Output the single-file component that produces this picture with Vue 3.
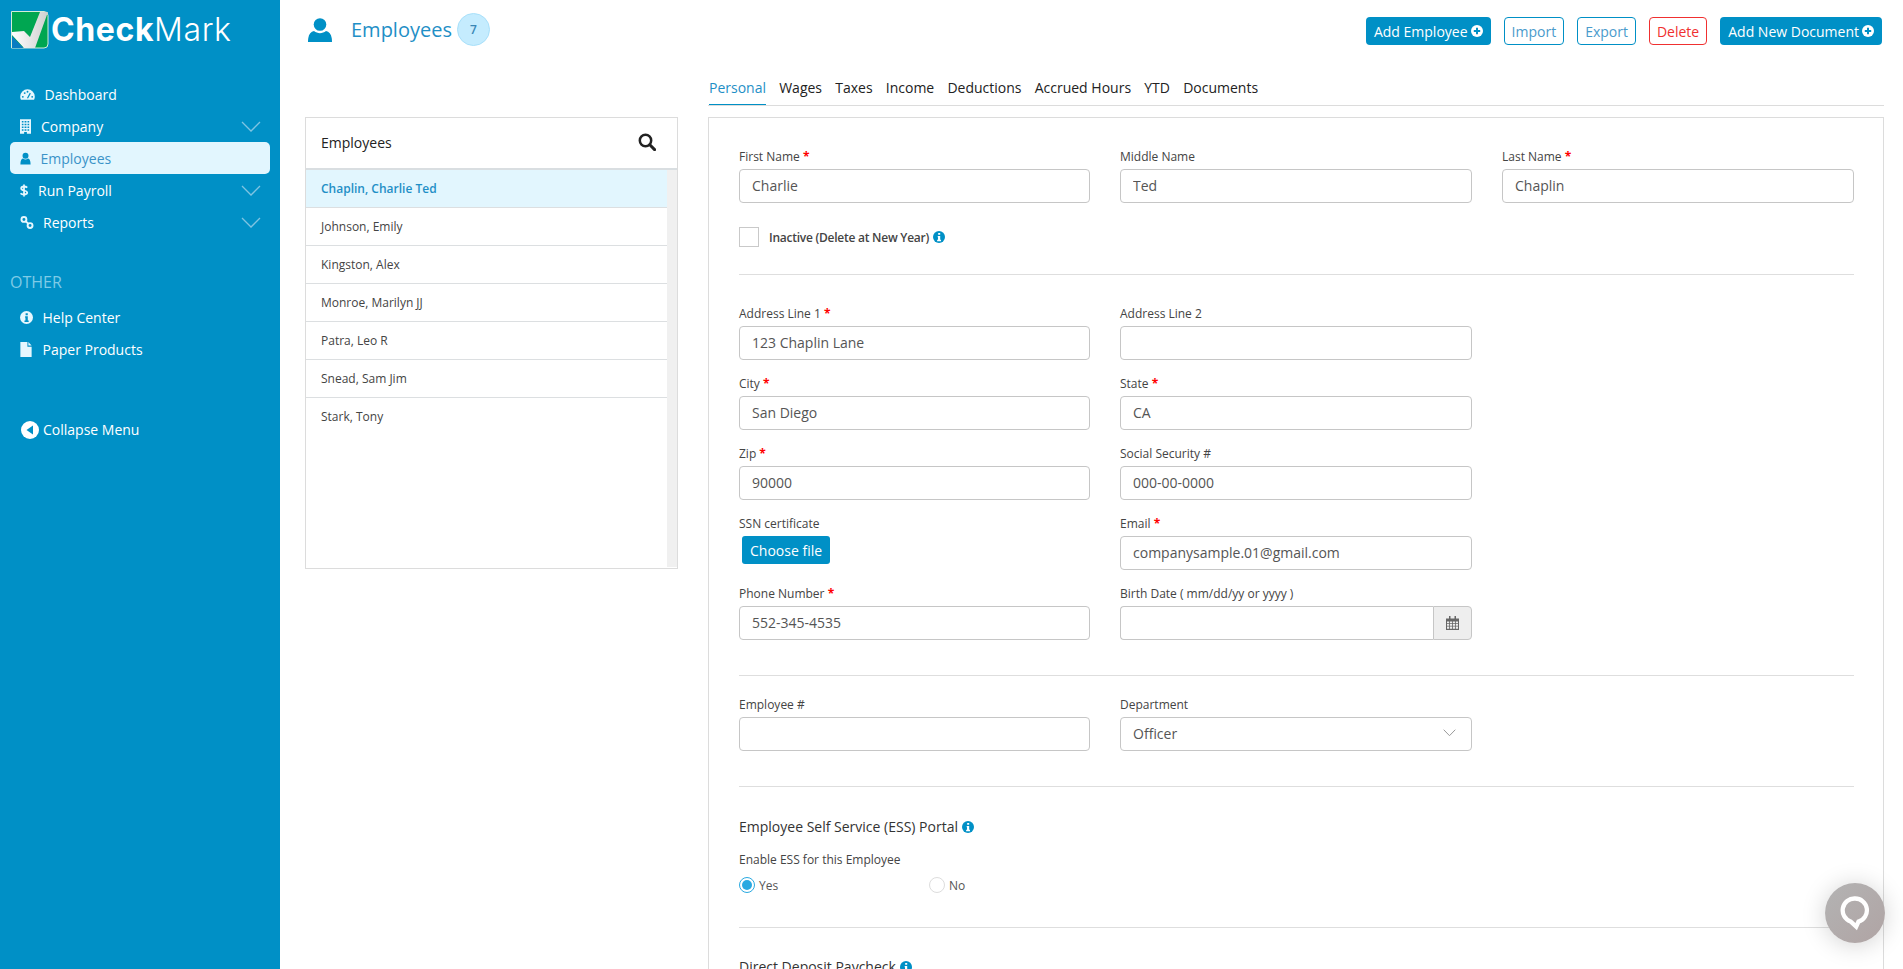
<template>
  <div class="layout">
    <aside class="sidebar">
      <div class="brand">
        <svg class="brand-mark" width="38" height="38" viewBox="0 0 38 38">
          <defs>
            <linearGradient id="check-shade" x1="0" y1="0" x2="1" y2="0">
              <stop offset="0" stop-color="#fff" />
              <stop offset="1" stop-color="#cfcfcf" />
            </linearGradient>
          </defs>
          <path d="M.5 .5H33a4 4 0 0 1 4 4V33a4 4 0 0 1-4 4H.5z" fill="#00a651" stroke="#d5ecd9" />
          <path d="M1 21 L13 20 L19 26 L29 1 H37 L24 37 H13 L1 24 Z" fill="url(#check-shade)" />
          <path d="M1 25 L12.500 37 H1 Z" fill="#0a7cc1" />
        </svg>
        <span class="brand-name"><b>Check</b>Mark</span>
      </div>

      <nav class="nav">
        <a
          v-for="item in mainNav"
          :key="item.label"
          class="nav-item"
          :class="{ active: item.active }"
        >
          <svg class="nav-icon" :style="{ width: item.w + 'px', marginRight: item.gap + 'px' }" :viewBox="item.vb" v-html="icons[item.icon]"></svg>
          <span>{{ item.label }}</span>
          <svg v-if="item.arrow" class="nav-arrow" width="20" height="11" viewBox="0 0 20 11">
            <path d="M1 1l9 9 9-9" fill="none" stroke="#7fc4e2" stroke-width="1.3" />
          </svg>
        </a>
      </nav>

      <div class="nav-title">OTHER</div>

      <nav class="nav">
        <a v-for="item in otherNav" :key="item.label" class="nav-item">
          <svg class="nav-icon" :style="{ width: item.w + 'px', marginRight: item.gap + 'px' }" :viewBox="item.vb" v-html="icons[item.icon]"></svg>
          <span>{{ item.label }}</span>
        </a>
      </nav>

      <a class="collapse">
        <svg width="18" height="18" viewBox="0 0 18 18">
          <circle cx="9" cy="9" r="9" fill="#fff" />
          <path d="M12 4.500v9L5.500 9z" fill="#0090c6" />
        </svg>
        <span>Collapse Menu</span>
      </a>
    </aside>

    <main class="main">
      <header class="topbar">
        <div class="page-title">
          <svg class="page-icon" width="24" height="24" viewBox="0 0 24 24">
            <circle cx="12" cy="6.500" r="6.300" fill="#0090c6" />
            <path d="M0 24c0-1 0-2 .3-4 .6-4 2.700-6.500 5.700-7 1.800 1.400 3.800 2.200 6 2.200s4.200-.8 6-2.200c3 .5 5.100 3 5.700 7 .3 2 .3 3 .3 4z" fill="#0090c6" />
          </svg>
          <h1>Employees</h1>
          <span class="count">7</span>
        </div>
        <div class="actions">
          <button class="btn solid">Add Employee <svg class="plus" viewBox="0 0 12 12"><circle cx="6" cy="6" r="6" fill="#fff" /><path d="M6 2.800v6.400M2.800 6h6.400" stroke="#0090c6" stroke-width="2" /></svg></button>
          <button class="btn outline">Import</button>
          <button class="btn outline">Export</button>
          <button class="btn danger">Delete</button>
          <button class="btn solid">Add New Document <svg class="plus" viewBox="0 0 12 12"><circle cx="6" cy="6" r="6" fill="#fff" /><path d="M6 2.800v6.400M2.800 6h6.400" stroke="#0090c6" stroke-width="2" /></svg></button>
        </div>
      </header>

      <div class="content">
        <section class="list-card">
          <div class="list-head">
            <span>Employees</span>
            <svg width="18" height="18" viewBox="0 0 18 18">
              <circle cx="7.500" cy="7.500" r="5.700" fill="none" stroke="#222" stroke-width="2.500" />
              <path d="M11.800 11.800l4.800 4.800" stroke="#222" stroke-width="3" stroke-linecap="round" />
            </svg>
          </div>
          <div class="list-body">
            <ul class="list">
              <li
                v-for="(name, i) in employees"
                :key="name"
                :class="{ selected: i === 0 }"
              >{{ name }}</li>
            </ul>
            <div class="track"></div>
          </div>
        </section>

        <section class="detail">
          <div class="tabs">
            <a v-for="(tab, i) in tabs" :key="tab" class="tab" :class="{ active: i === 0 }">{{ tab }}</a>
          </div>

          <div class="panel">
            <div class="grid three">
              <div class="field"><label>First Name <i>*</i></label><input value="Charlie" /></div>
              <div class="field"><label>Middle Name</label><input value="Ted" /></div>
              <div class="field"><label>Last Name <i>*</i></label><input value="Chaplin" /></div>
            </div>

            <div class="inactive">
              <span class="checkbox"></span>
              <span class="inactive-text">Inactive (Delete at New Year)</span>
              <svg class="info" width="12" height="12" viewBox="0 0 16 16" v-html="icons.info"></svg>
            </div>

            <hr class="sep sep-a" />

            <div class="grid three rows">
              <div class="field"><label>Address Line 1 <i>*</i></label><input value="123 Chaplin Lane" /></div>
              <div class="field"><label>Address Line 2</label><input value="" /></div>
              <div></div>

              <div class="field"><label>City <i>*</i></label><input value="San Diego" /></div>
              <div class="field"><label>State <i>*</i></label><input value="CA" /></div>
              <div></div>

              <div class="field"><label>Zip <i>*</i></label><input value="90000" /></div>
              <div class="field"><label>Social Security #</label><input value="000-00-0000" /></div>
              <div></div>

              <div class="field">
                <label>SSN certificate</label>
                <button class="file-btn">Choose file</button>
              </div>
              <div class="field"><label>Email <i>*</i></label><input value="companysample.01@gmail.com" /></div>
              <div></div>

              <div class="field"><label>Phone Number <i>*</i></label><input value="552-345-4535" /></div>
              <div class="field">
                <label>Birth Date ( mm/dd/yy or yyyy )</label>
                <div class="date">
                  <input value="" />
                  <span class="date-btn">
                    <svg width="13" height="14" viewBox="0 0 13 14">
                      <path d="M0 2.500h13V14H0z" fill="#666" />
                      <path d="M1 5.500h2.200v1.700H1zM4 5.500h2.200v1.700H4zM7 5.500h2v1.700H7zM9.800 5.500H12v1.700H9.800zM1 8h2.200v1.700H1zM4 8h2.200v1.700H4zM7 8h2v1.700H7zM9.800 8H12v1.700H9.800zM1 10.500h2.200v2.300H1zM4 10.500h2.200v2.300H4zM7 10.500h2v2.300H7zM9.800 10.500H12v2.300H9.800z" fill="#eee" />
                      <path d="M3 0h1.500v4H3zM8.500 0H10v4H8.500z" fill="#666" />
                    </svg>
                  </span>
                </div>
              </div>
            </div>

            <hr class="sep sep-b" />

            <div class="grid three">
              <div class="field"><label>Employee #</label><input value="" /></div>
              <div class="field">
                <label>Department</label>
                <div class="select">
                  <span>Officer</span>
                  <svg width="13" height="8" viewBox="0 0 13 8"><path d="M.7.7l5.800 6 5.800-6" fill="none" stroke="#999" /></svg>
                </div>
              </div>
            </div>

            <hr class="sep sep-c" />

            <h3 class="sub-head">Employee Self Service (ESS) Portal<svg class="info" width="12" height="12" viewBox="0 0 16 16" v-html="icons.info"></svg></h3>
            <div class="enable">Enable ESS for this Employee</div>
            <div class="radios">
              <span class="radio-opt"><span class="radio on"></span>Yes</span>
              <span class="radio-opt"><span class="radio"></span>No</span>
            </div>

            <hr class="sep sep-d" />

            <h3 class="sub-head">Direct Deposit Paycheck<svg class="info" width="12" height="12" viewBox="0 0 16 16" v-html="icons.info"></svg></h3>
          </div>
        </section>
      </div>
    </main>

    <button class="chat">
      <svg width="30" height="36" viewBox="0 0 30 36">
        <path d="M15 3.500a11.800 11.800 0 0 1 3.500 23.100l-2.300 5-5.700-5.200A11.800 11.800 0 0 1 15 3.500z" fill="none" stroke="#fff" stroke-width="4.300" />
      </svg>
    </button>
  </div>
</template>

<script setup>
const icons = {
  dashboard: '<path fill="currentColor" d="M8 2.500A7.800 7.800 0 0 0 .2 10.300c0 1.200.3 2.200.8 3.200h14c.5-1 .8-2 .8-3.200A7.800 7.800 0 0 0 8 2.500z"/><circle cx="3" cy="10.500" r="1" fill="#0090c6"/><circle cx="5" cy="6.500" r="1" fill="#0090c6"/><circle cx="8" cy="5" r="1" fill="#0090c6"/><circle cx="13" cy="10.500" r="1" fill="#0090c6"/><path d="M8 12l3-5.500" stroke="#0090c6" stroke-width="1.300"/>',
  company: '<path fill="currentColor" fill-rule="evenodd" d="M2 0h12v16H2zM4 2v1.500h1.800V2zm3 0v1.500h2V2zm3.200 0v1.500H12V2zM4 5v1.500h1.800V5zm3 0v1.500h2V5zm3.200 0v1.500H12V5zM4 8v1.500h1.800V8zm3 0v1.500h2V8zm3.200 0v1.500H12V8zM4 11v1.500h1.800V11zm3 0v1.500h2V11zm3.200 0v1.500H12V11zM6.500 14v2h3v-2z"/>',
  user: '<circle cx="8" cy="4.500" r="3.800" fill="currentColor"/><path fill="currentColor" d="M1.500 15.500c0-5 1.500-7.500 3.500-7.500 1 .9 2 1.300 3 1.300s2-.4 3-1.300c2 0 3.500 2.500 3.500 7.500z"/>',
  dollar: '<path fill="none" stroke="currentColor" stroke-width="2.200" d="M12 4.300C11 3.300 9.500 3 8 3 6 3 4.500 4 4.500 5.500 4.500 9 12 7 12 10.500 12 12 10 13 8 13c-1.500 0-3.200-.4-4.300-1.500M8 .5v15"/>',
  link: '<g fill="none" stroke="currentColor" stroke-width="2.200"><circle cx="4.500" cy="4.500" r="2.800"/><circle cx="11.500" cy="11.500" r="2.800"/><path d="M6.500 6.500l3 3"/></g>',
  info: '<circle cx="8" cy="8" r="8" fill="currentColor"/><path fill="var(--info-ink, #0090c6)" d="M6.300 6.500h3.300v5.200h1.100v1.800H5.500v-1.800h1.200V8.300H6.300zM6.900 2.700h2.700v2.400H6.900z"/>',
  file: '<path fill="currentColor" d="M2 0h7.500v5H14v11H2z"/><path fill="currentColor" d="M10.500 0L14 3.800h-3.500z"/>'
}

const mainNav = [
  { label: 'Dashboard', icon: 'dashboard', vb: '0 0 16 16', w: 15, gap: 9.5 },
  { label: 'Company', icon: 'company', vb: '2 0 12 16', w: 11, gap: 10, arrow: true },
  { label: 'Employees', icon: 'user', vb: '1 0 14 16', w: 11, gap: 9.5, active: true },
  { label: 'Run Payroll', icon: 'dollar', vb: '3 0 10 16', w: 8, gap: 10, arrow: true },
  { label: 'Reports', icon: 'link', vb: '0 0 16 16', w: 14, gap: 9, arrow: true }
]

const otherNav = [
  { label: 'Help Center', icon: 'info', vb: '0 0 16 16', w: 13, gap: 9.5 },
  { label: 'Paper Products', icon: 'file', vb: '2 0 12 16', w: 12, gap: 10.5 }
]

const employees = [
  'Chaplin, Charlie Ted',
  'Johnson, Emily',
  'Kingston, Alex',
  'Monroe, Marilyn JJ',
  'Patra, Leo R',
  'Snead, Sam Jim',
  'Stark, Tony'
]

const tabs = ['Personal', 'Wages', 'Taxes', 'Income', 'Deductions', 'Accrued Hours', 'YTD', 'Documents']
</script>

<style>
html, body {
  margin: 0;
  height: 100%;
  overflow: hidden;
  background: #fff;
}
</style>

<style scoped>
.layout {
  display: flex;
  position: relative;
  height: 969px;
  overflow: hidden;
  font-family: "Open Sans", "Noto Sans", sans-serif;
  font-size: 12px;
  color: #444;
}

/* sidebar */
.sidebar {
  flex: 0 0 280px;
  background: #0090c6;
  color: #fff;
  box-sizing: border-box;
  padding: 11px 10px 0;
}

.brand {
  display: flex;
  align-items: center;
  height: 38px;
  margin-bottom: 29px;
  margin-left: 1px;
}

.brand-mark {
  flex: none;
}

.brand-name {
  margin-left: 2px;
  font-family: Inter, "Open Sans", sans-serif;
  font-size: 32px;
  font-weight: 300;
  line-height: 38px;
  letter-spacing: 0.6px;
}

.brand-name b {
  font-weight: 700;
}

.nav {
  display: flex;
  flex-direction: column;
}

.nav-item {
  display: flex;
  align-items: center;
  height: 32px;
  padding: 0 9px 0 10px;
  border-radius: 5px;
  font-size: 14px;
  color: #fff;
}

.nav-item.active {
  background: #e2f6fe;
  color: #3a93c8;
}

.nav-icon {
  flex: none;
  height: 15px;
  color: #e6f7fe;
  --info-ink: #0090c6;
}

.nav-item.active .nav-icon {
  color: #0090c6;
}

.nav-arrow {
  margin-left: auto;
}

.nav-title {
  margin: 33px 0 8px;
  font-size: 16px;
  line-height: 22px;
  color: #7fcbe6;
}

.collapse {
  display: flex;
  align-items: center;
  gap: 4px;
  margin: 56px 0 0 11px;
  font-size: 14px;
  line-height: 18px;
  color: #fff;
}

/* main area */
.main {
  flex: 1;
  min-width: 0;
  padding: 0 19px 0 25px;
}

.topbar {
  display: flex;
  justify-content: space-between;
  align-items: flex-start;
  height: 60px;
}

.page-title {
  display: flex;
  align-items: center;
  height: 33px;
  margin: 13px 0 0 3px;
}

.page-title h1 {
  margin: 0 0 0 19px;
  font-size: 20px;
  font-weight: 400;
  color: #1f8fc6;
}

.page-icon {
  margin-top: 1px;
}

.count {
  display: flex;
  align-items: center;
  justify-content: center;
  box-sizing: border-box;
  width: 33px;
  height: 33px;
  margin-left: 5px;
  border: 1px solid #a8e0fa;
  border-radius: 50%;
  background: #c5ecfe;
  font-size: 12px;
  font-weight: 600;
  color: #3a87b5;
}

.actions {
  display: flex;
  gap: 13px;
  margin: 17px 2px 0 0;
}

.btn {
  display: flex;
  align-items: center;
  gap: 3px;
  box-sizing: border-box;
  height: 28px;
  padding: 0 7px;
  border: 1px solid transparent;
  border-radius: 4px;
  background: #fff;
  font-family: inherit;
  font-size: 14px;
}

.btn.solid {
  background: #0090c6;
  color: #fff;
}

.btn.outline {
  border-color: #0090c6;
  color: #4a9bcc;
}

.btn.danger {
  border-color: #f03030;
  color: #f03030;
}

.plus {
  width: 12px;
  height: 12px;
}

.content {
  display: flex;
  align-items: flex-start;
  gap: 30px;
}

/* employee list */
.list-card {
  flex: 0 0 373px;
  box-sizing: border-box;
  height: 452px;
  margin-top: 57px;
  border: 1px solid #dcdcdc;
}

.list-head {
  display: flex;
  justify-content: space-between;
  align-items: center;
  box-sizing: border-box;
  height: 52px;
  padding: 0 21px 2px 15px;
  border-bottom: 2px solid #d9dee1;
  font-size: 14px;
  font-weight: 500;
  color: #222;
}

.list-body {
  display: flex;
  height: 397px;
}

.list {
  flex: 1;
  margin: 0;
  padding: 0;
  list-style: none;
}

.list li {
  box-sizing: border-box;
  height: 38px;
  padding-left: 15px;
  border-bottom: 1px solid #dcdfe1;
  font-size: 12px;
  line-height: 37px;
  color: #444;
}

.list li:last-child {
  border-bottom: 0;
}

.list li.selected {
  background: #e2f6fe;
  color: #1f8fc6;
  font-weight: 600;
}

.track {
  flex: 0 0 10px;
  background: #f0f0f0;
}

/* tabs and form */
.detail {
  flex: 1;
  min-width: 0;
}

.tabs {
  display: flex;
  gap: 13.200px;
  box-sizing: border-box;
  height: 46px;
  padding-left: 1px;
  border-bottom: 1px solid #dcdcdc;
}

.tab {
  box-sizing: border-box;
  height: 45px;
  padding-top: 18px;
  font-size: 14px;
  font-weight: 500;
  line-height: 20px;
  color: #222;
}

.tab.active {
  border-bottom: 1px solid #0090c6;
  color: #1f8fc6;
}

.panel {
  box-sizing: border-box;
  height: 900px;
  margin-top: 11px;
  padding: 29px 29px 0 30px;
  border: 1px solid #dcdcdc;
}

.grid {
  display: grid;
  gap: 0 30px;
}

.grid.three {
  grid-template-columns: 351px 352px 352px;
}

.grid.rows {
  row-gap: 14px;
}

.field label {
  display: block;
  height: 18px;
  margin-bottom: 4px;
  font-size: 12px;
  line-height: 19px;
  color: #444;
}

.field label i {
  font-style: normal;
  font-weight: 700;
  color: #f00;
}

input {
  display: block;
  box-sizing: border-box;
  width: 100%;
  height: 34px;
  padding: 0 12px 2px;
  border: 1px solid #c6c6c6;
  border-radius: 4px;
  outline: 0;
  font-family: inherit;
  font-size: 14px;
  color: #555;
  background: #fff;
}

.inactive {
  display: flex;
  align-items: center;
  height: 20px;
  margin-top: 24px;
}

.checkbox {
  box-sizing: border-box;
  width: 20px;
  height: 20px;
  margin-right: 10px;
  border: 1px solid #c9c9c9;
}

.inactive-text {
  font-size: 12px;
  font-weight: 600;
  letter-spacing: -0.25px;
  color: #444;
}

.info {
  margin-left: 4px;
  color: #0090c6;
  --info-ink: #fff;
  vertical-align: -1px;
}

.sep {
  height: 1px;
  margin: 0;
  border: 0;
  background: #dedede;
}

.sep-a {
  margin: 27px 0 29px;
}

.sep-b {
  margin: 35px 0 19px;
}

.sep-c {
  margin: 35px 0 30px;
}

.sep-d {
  margin: 34px 0 29px;
}

.file-btn {
  display: block;
  height: 28px;
  margin: 2px 0 0 3px;
  padding: 0 8px;
  border: 0;
  border-radius: 3px;
  background: #0090c6;
  font-family: inherit;
  font-size: 14px;
  color: #fff;
}

.date {
  display: flex;
}

.date input {
  border-radius: 4px 0 0 4px;
  border-right: 0;
}

.date-btn {
  display: flex;
  flex: 0 0 39px;
  align-items: center;
  justify-content: center;
  box-sizing: border-box;
  height: 34px;
  border: 1px solid #c6c6c6;
  border-radius: 0 4px 4px 0;
  background: #eee;
}

.select {
  display: flex;
  align-items: center;
  justify-content: space-between;
  box-sizing: border-box;
  height: 34px;
  padding: 0 15px 2px 12px;
  border: 1px solid #c6c6c6;
  border-radius: 4px;
  font-size: 14px;
  color: #555;
}

.sub-head {
  margin: 0;
  font-size: 14px;
  font-weight: 500;
  line-height: 20px;
  color: #333;
}

.enable {
  margin-top: 14px;
  font-size: 12px;
  font-weight: 500;
  line-height: 17px;
  color: #444;
}

.radios {
  display: flex;
  margin-top: 9px;
}

.radio-opt {
  display: flex;
  flex: 0 0 190px;
  align-items: center;
  gap: 4px;
  height: 16px;
  font-size: 12px;
  color: #555;
}

.radio {
  box-sizing: border-box;
  position: relative;
  width: 16px;
  height: 16px;
  border: 1px solid #ddd;
  border-radius: 50%;
}

.radio.on {
  border-color: #29a9e1;
}

.radio.on::after {
  content: "";
  position: absolute;
  inset: 2px;
  border-radius: 50%;
  background: #29a9e1;
}

.chat {
  position: absolute;
  top: 883px;
  left: 1825px;
  display: flex;
  align-items: center;
  justify-content: center;
  width: 60px;
  height: 60px;
  padding: 0;
  border: 0;
  border-radius: 50%;
  background: linear-gradient(135deg, #b3b3b3, #b0a4a4);
  box-shadow: 0 2px 24px rgba(0, 0, 0, 0.18);
}
</style>
